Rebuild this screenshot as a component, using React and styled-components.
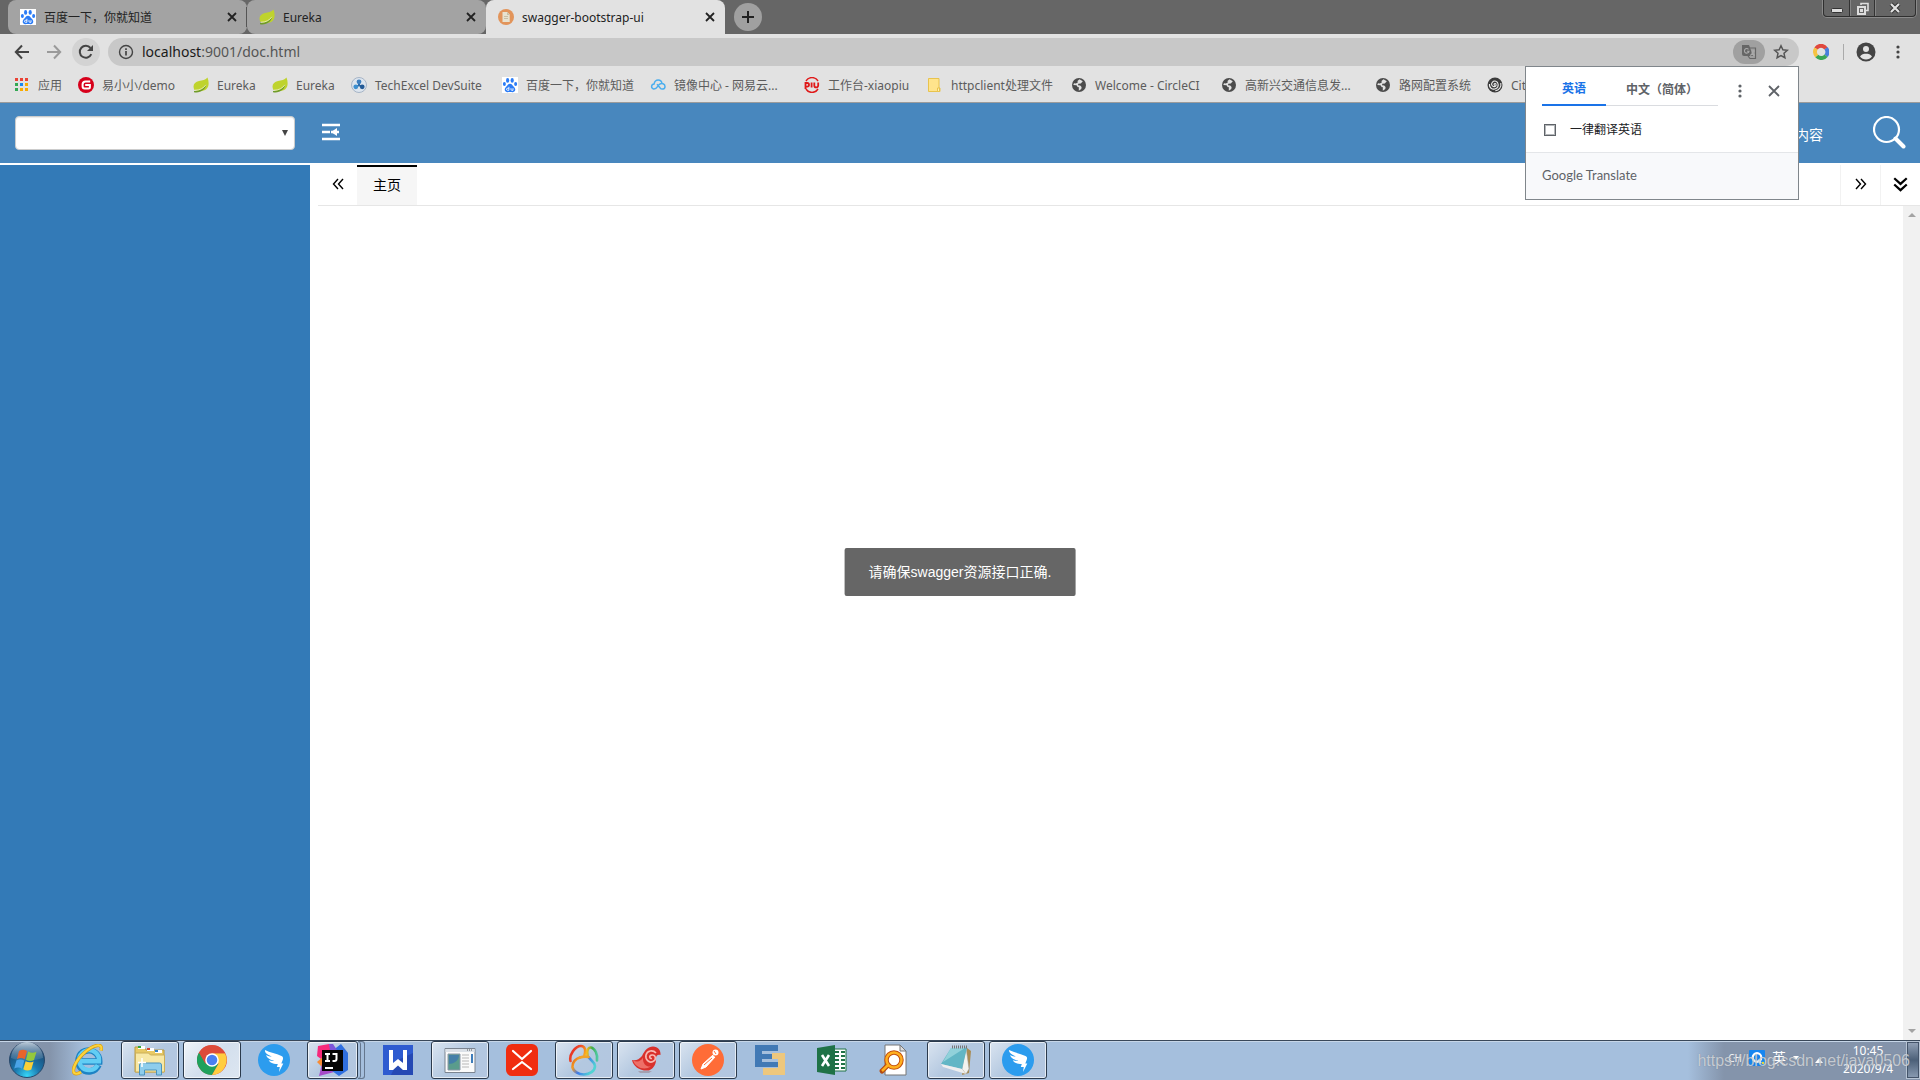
import React from "react";
import styled, { createGlobalStyle, css } from "styled-components";

const Global = createGlobalStyle`
  *, *::before, *::after { box-sizing: border-box; }
  html, body { margin: 0; padding: 0; }
  body { font-family: "Noto Sans", "Noto Sans CJK SC", sans-serif; font-size: 12px; background: #fff; overflow: hidden; }
  button { border: 0; padding: 0; margin: 0; background: none; font: inherit; color: inherit; }
  a { color: inherit; text-decoration: none; }
  svg { display: block; flex: none; }
`;

const Screen = styled.div`
  display: flex;
  flex-direction: column;
  height: 100vh;
  position: relative;
`;

/* ---------- browser chrome ---------- */
const TabStrip = styled.div`
  display: flex;
  height: 34px;
  flex: none;
  padding-left: 8px;
  background: #666;
`;
const BrowserTab = styled.div`
  display: flex;
  align-items: center;
  width: 239px;
  height: 34px;
  padding: 0 7px 0 12px;
  gap: 8px;
  border-radius: 8px 8px ${(p) => (p.$active ? "0 0" : "8px 8px")};
  background: ${(p) => (p.$active ? "#e2e2e2" : "#a3a3a3")};
  color: #222;
`;
const TabTitle = styled.span`
  flex: 1;
  padding-top: 1px;
  font-size: 12px;
  line-height: 18px;
  white-space: nowrap;
`;
const TabDivider = styled.span`
  width: 1px;
  height: 20px;
  margin-left: -1px;
  align-self: center;
  background: #555;
`;
const IconButton = styled.button`
  display: flex;
  align-items: center;
  justify-content: center;
  flex: none;
  width: ${(p) => p.$size || 16}px;
  height: ${(p) => p.$size || 16}px;
  border-radius: 50%;
  background: ${(p) => p.$bg || "transparent"};
`;
const NewTabSlot = styled.div`
  display: flex;
  align-items: center;
  padding-left: 9px;
`;
const WindowControls = styled.div`
  display: flex;
  margin-left: auto;
  margin-right: 4px;
  height: 17px;
  border: 1px solid #2f2f2f;
  border-top: 0;
  border-radius: 0 0 4px 4px;
  box-shadow: 0 0 0 1px #8a8a8a;
`;
const WindowButton = styled.button`
  display: flex;
  align-items: center;
  justify-content: center;
  width: ${(p) => p.$w}px;
  & + & { border-left: 1px solid #333; box-shadow: inset 1px 0 #858585; }
`;

const Toolbar = styled.div`
  display: flex;
  align-items: center;
  height: 36px;
  flex: none;
  padding: 0 8px;
  background: #e2e2e2;
`;
const NavButtons = styled.div`
  display: flex;
  gap: 4px;
  margin-right: 8px;
`;
const Omnibox = styled.div`
  display: flex;
  align-items: center;
  flex: 1;
  height: 28px;
  padding: 0 6px 0 10px;
  gap: 4px;
  border-radius: 14px;
  background: #c8c8c8;
  color: #555;
`;
const Address = styled.a`
  flex: 1;
  padding-left: 4px;
  font-family: "Noto Sans", sans-serif;
  font-size: 14px;
  line-height: 20px;
  b { font-weight: 400; color: #1a1a1a; }
`;
const TranslateButton = styled.button`
  display: flex;
  align-items: center;
  justify-content: center;
  width: 32px;
  height: 24px;
  border-radius: 12px;
  background: #a0a0a0;
`;
const ToolbarEnd = styled.div`
  display: flex;
  align-items: center;
  gap: 12px;
  width: 113px;
  padding-left: 14px;
`;
const ToolbarRule = styled.span`
  width: 1px;
  height: 16px;
  margin-left: 2px;
  background: #aaa;
`;

const Bookmarks = styled.nav`
  display: flex;
  align-items: center;
  height: 33px;
  flex: none;
  padding: 0 0 3px 14px;
  overflow: hidden;
  background: #e2e2e2;
  border-bottom: 1px solid #9b9b9b;
`;
const Bookmark = styled.a`
  display: flex;
  align-items: center;
  flex: none;
  gap: 8px;
  width: ${(p) => p.$w}px;
  font-size: 12px;
  line-height: 18px;
  color: #5c5c5c;
  white-space: nowrap;
`;
const BookmarkTitle = styled.span`
  padding-top: 2px;
`;

/* ---------- page ---------- */
const Page = styled.main`
  display: flex;
  flex-direction: column;
  flex: 1;
  min-height: 0;
  position: relative;
`;
const Header = styled.header`
  display: flex;
  align-items: center;
  height: 60px;
  flex: none;
  padding: 0 14px 2px 15px;
  margin-bottom: 2px;
  background: #4887be;
`;
const SelectWrap = styled.label`
  display: flex;
  position: relative;
  width: 280px;
  margin-right: 27px;
  padding-top: 1px;
  svg { position: absolute; right: 5px; top: 13px; pointer-events: none; }
`;
const GroupSelect = styled.select`
  appearance: none;
  width: 100%;
  height: 34px;
  border: 1px solid #ccc;
  border-radius: 4px;
  background: #fff;
  box-shadow: inset 0 1px 1px rgba(0, 0, 0, 0.08);
`;
const SearchInput = styled.input`
  width: 64px;
  height: 34px;
  margin-left: auto;
  margin-right: 14px;
  padding: 4px 0 0;
  border: 0;
  outline: 0;
  background: transparent;
  font-family: "Noto Sans", "Noto Sans CJK SC", sans-serif;
  font-size: 14px;
  color: #fff;
  &::placeholder { color: #fff; opacity: 1; }
`;
const Body = styled.div`
  display: flex;
  flex: 1;
  min-height: 0;
`;
const Sidebar = styled.aside`
  width: 310px;
  flex: none;
  background: #337ab7;
`;
const Content = styled.section`
  display: flex;
  flex-direction: column;
  flex: 1;
  padding-left: 8px;
`;
const PageTabs = styled.div`
  display: flex;
  height: 41px;
  flex: none;
  border-bottom: 1px solid #e6e6e6;
`;
const TabScroll = styled.button`
  display: flex;
  align-items: center;
  justify-content: center;
  width: ${(p) => (p.$ruled ? 40 : 39)}px;
  padding-bottom: 2px;
  border-left: ${(p) => (p.$ruled ? "1px solid #f2f2f2" : "0")};
`;
const PageTab = styled.button`
  width: 60px;
  padding-bottom: 2px;
  border-top: 2px solid #000;
  background: #f6f6f6;
  font-size: 14px;
  line-height: 20px;
  color: #000;
`;
const Spacer = styled.span`
  flex: 1;
`;
const Viewport = styled.div`
  display: flex;
  justify-content: flex-end;
  flex: 1;
`;
const Scrollbar = styled.div`
  display: flex;
  flex-direction: column;
  justify-content: space-between;
  align-items: center;
  width: 17px;
  padding: 6px 0;
  background: #f1f1f1;
`;
const Toast = styled.div`
  position: absolute;
  left: 50%;
  top: 50%;
  transform: translate(-50%, -50%);
  padding: 12px 24px;
  border-radius: 2px;
  background: #666;
  color: #fff;
  font-family: "Liberation Sans", "Noto Sans CJK SC", sans-serif;
  font-size: 14px;
  line-height: 24px;
  white-space: nowrap;
`;

/* ---------- translate bubble ---------- */
const Bubble = styled.div`
  position: absolute;
  top: 66px;
  right: 121px;
  width: 274px;
  border: 1px solid #80868b;
  background: #fff;
`;
const BubbleTop = styled.div`
  display: flex;
  align-items: center;
  height: 47px;
  padding-left: 16px;
`;
const LangTab = styled.button`
  width: ${(p) => p.$w}px;
  height: 39px;
  align-self: flex-start;
  padding-top: 7px;
  border-bottom: ${(p) => (p.$active ? "2px solid #1a73e8" : "1px solid #dadce0")};
  color: ${(p) => (p.$active ? "#1a73e8" : "#5f6368")};
  font-size: 12px;
  font-weight: 700;
  line-height: 18px;
  white-space: nowrap;
`;
const BubbleActions = styled.div`
  display: flex;
  gap: 18px;
  padding-left: 14px;
`;
const Always = styled.label`
  display: flex;
  align-items: center;
  gap: 14px;
  height: 38px;
  padding: 0 0 6px 18px;
  font-size: 12px;
  line-height: 18px;
  color: #202124;
`;
const Check = styled.input`
  appearance: none;
  width: 12px;
  height: 12px;
  margin: 0;
  border: 1px solid #5f6368;
  outline: 1px solid #b4b7ba;
  outline-offset: -2px;
`;
const BubbleFooter = styled.div`
  height: 47px;
  padding: 12px 16px;
  border-top: 1px solid #e4e6e9;
  background: #f8f9fb;
  color: #5f6368;
  font-family: Lato, sans-serif;
  font-size: 13px;
  line-height: 20px;
`;

/* ---------- taskbar ---------- */
const Taskbar = styled.footer`
  display: flex;
  align-items: stretch;
  height: 40px;
  flex: none;
  padding-bottom: 1px;
  border-top: 1px solid #39485a;
  box-shadow: inset 0 1px #c6d6e8;
  background: linear-gradient(90deg, #8494ab 0, #8494ab 50px, #a5bfdd 85px, #a5bfdd calc(100% - 232px), #8494ab calc(100% - 196px), #8494ab 100%);
`;
const Start = styled.button`
  display: flex;
  align-items: center;
  justify-content: center;
  width: 54px;
  margin-right: 5px;
`;
const Apps = styled.div`
  display: flex;
  gap: 4px;
`;
const raised = css`
  border: 1px solid #2b3a4c;
  border-radius: 3px;
  box-shadow: inset 0 0 0 1px rgba(255, 255, 255, 0.65);
  background: linear-gradient(135deg, ${(p) => (p.$front ? "#f0f4f9, #d3dfed 50%, #dde6f1" : "#dae4f0, #b3c8e0 50%, #b3c6e0")});
`;
const AppButton = styled.button`
  display: flex;
  align-items: center;
  justify-content: center;
  width: ${(p) => (p.$stack ? 51 : 58)}px;
  ${(p) => p.$open && raised}
`;
const Stack = styled.span`
  display: flex;
  width: 58px;
  &::after {
    content: "";
    flex: 1;
    border: 1px solid #65778e;
    border-left: 0;
    border-radius: 0 3px 3px 0;
    box-shadow: inset -3px 0 #a5bfdd, inset -4px 0 #65778e;
  }
`;
const Tray = styled.div`
  display: flex;
  align-items: center;
  margin-left: auto;
  color: #fff;
`;
const Ime = styled.div`
  display: flex;
  align-items: center;
  gap: 7px;
  margin-right: 9px;
  padding-bottom: 5px;
  line-height: 16px;
`;
const ImeLang = styled.span`
  font-family: "Noto Sans", sans-serif;
  font-size: 10px;
  color: #f2f2f2;
`;
const ImeMode = styled.span`
  font-size: 14px;
`;
const Clock = styled.time`
  width: 54px;
  margin: 0 11px;
  text-align: center;
  font-family: "Noto Sans", sans-serif;
  font-size: 12px;
  line-height: 18px;
  white-space: nowrap;
`;
const ShowDesktop = styled.button`
  width: 14px;
  align-self: stretch;
  border: 1px solid #b7c4d4;
  outline: 1px solid #44546a;
  outline-offset: -2px;
  background: linear-gradient(#93a2b7, #4c6078 50%, #8b9cb3);
`;
const Watermark = styled.div`
  position: absolute;
  right: 10px;
  bottom: 8px;
  font-family: "Liberation Sans", sans-serif;
  font-size: 16px;
  line-height: 22px;
  color: rgba(225, 228, 232, 0.75);
  text-shadow: 0 0 1px rgba(90, 100, 115, 0.6);
  pointer-events: none;
`;

/* ---------- icons ---------- */
const Svg = ({ s = 16, w, h, vb, children }) => (
  <svg width={w || s} height={h || s} viewBox={vb || `0 0 ${w || s} ${h || s}`} fill="none" aria-hidden="true">
    {children}
  </svg>
);
const Cross = ({ c = "#222", s = 16, k = 4 }) => (
  <Svg s={s} vb="0 0 16 16"><path d={`M${k} ${k}L${16 - k} ${16 - k}M${16 - k} ${k}L${k} ${16 - k}`} stroke={c} strokeWidth="1.8" /></Svg>
);
const Paw = () => (
  <Svg>
    <path fill="#fff" d="M0 0h16v16H0z" />
    <g fill="#2b7cf6">
      <ellipse cx="5.6" cy="3.4" rx="1.6" ry="2.3" /><ellipse cx="10.2" cy="3.4" rx="1.6" ry="2.3" />
      <ellipse cx="2.4" cy="7" rx="1.5" ry="2" /><ellipse cx="13.6" cy="7" rx="1.5" ry="2" />
      <path d="M8 6.8c2 0 2.4 1.7 3.8 2.9 2.4 2 1.7 5.3-.9 5.5-1 .1-1.8-.2-2.9-.2s-1.900.3-2.900.2c-2.600-.2-3.300-3.500-.9-5.500C5.600 8.500 6 6.800 8 6.800z" />
    </g>
    <path d="M6.900 9.800v3.500H5.500a1 1 0 010-2h1.400M9 11.200v1.300q0 .8 1 .8h1v-2.100" stroke="#fff" strokeWidth=".9" />
  </Svg>
);
const Leaf = () => (
  <Svg>
    <path fill="#bfd32d" d="M14.500 .5c1.500 4 1.800 9-1 11.600-3 2.700-8 2.500-12 1C-1 8.500 1.500 4.800 6 4c3.500-.6 6.500-1 8.500-3.500z" />
    <path fill="#6f9b2a" d="M1 13.900c5 .3 9.500-1.500 12.300-6.900-.7 5.800-6.300 9.500-12.300 8.200z" />
    <path d="M2 13.200c4.500 0 8.500-1.700 11-5.500" stroke="#eef3c9" strokeWidth=".8" />
  </Svg>
);
const DocIcon = () => (
  <Svg><circle cx="8" cy="8" r="8" fill="#e2945a" /><path fill="#e8e2cf" d="M4.500 3h4.700l2.500 2.600V13H4.500z" /><path fill="#c8bfa5" d="M9 3v3h2.700zM6 7h4v1H6zM6 9h4v1H6z" /></Svg>
);
const AppsGrid = () => {
  const colors = ["#ea4335", "#ea4335", "#ea4335", "#34a853", "#1a88f0", "#f9ab00", "#34a853", "#f9ab00", "#f9ab00"];
  return <Svg>{colors.map((c, i) => <rect key={i} x={1 + (i % 3) * 5} y={1 + Math.floor(i / 3) * 5} width="3" height="3" fill={c} />)}</Svg>;
};
const GMark = () => (
  <Svg><circle cx="8" cy="8" r="8" fill="#d7001b" /><path d="M12.200 4.500H7.500A3 3 0 004.600 7.200v2.300a2 2 0 002 2h3.800a1.500 1.500 0 001.500-1.500V8.100H7.200" stroke="#fff" strokeWidth="2" /></Svg>
);
const Tech = () => (
  <Svg><circle cx="8" cy="8" r="7.500" fill="#dde5ee" stroke="#a6b4c6" /><path d="M8 5v4M5 10l3-2 3 2" stroke="#2c6aa8" strokeWidth="2" /><circle cx="8" cy="4.800" r="2.400" fill="#3d7fbf" /><circle cx="4.800" cy="9.800" r="2.400" fill="#3d8fcf" /><circle cx="11.200" cy="9.800" r="2.400" fill="#235a96" /></Svg>
);
const Cloud = () => (
  <Svg><path d="M3.500 12a2.600 2.600 0 01.6-5.100C4.600 4.300 6.200 3 8.200 3c2 0 3.400 1.200 3.800 3.400M3.500 12c3.500.6 4-3.500 6.200-4.900 2-1.300 5.300-.6 5.300 2.300 0 3.200-3.700 3.400-5 1.400L7 7.200" stroke="#4aaeee" strokeWidth="1.500" /></Svg>
);
const Piu = () => (
  <Svg><path d="M2 4a7 7 0 0112 0M2 12a7 7 0 0012 0" stroke="#e01818" strokeWidth="1.500" /><path d="M1.500 12V6h1.700a1.500 1.500 0 010 3.600H1.500M7.600 5.500v5M10.300 5.500v3a1.900 1.900 0 003.900 0v-3" stroke="#e01818" strokeWidth="1.800" /></Svg>
);
const Folder = () => (
  <Svg><path d="M1.500 1.500h10.500v9.500h1v3.500H1.500z" fill="#ffe48c" stroke="#e8c34d" /><path d="M12.500 11v3.500H10.500V11z" fill="#fff0b4" stroke="#e8c34d" /></Svg>
);
const Globe = () => (
  <Svg><circle cx="8" cy="8" r="7" fill="#4b4b4b" /><path fill="#e2e2e2" d="M8.500 2.300 6.500 4l.3 1.500-2 1L3 6.200 2.300 8l3.200.3 1.300 1.900 1-.3v3.800l2.500-1.700.3-2-1.400-1.400-2.200-.3.3-1.500 2.500-.3 2-2.200z" /></Svg>
);
const Swirl = () => (
  <Svg><circle cx="8" cy="8" r="7.500" fill="#3b3b3b" /><path d="M8 8.500a1 1 0 111-1.300c.8 2.200-2.500 3.500-4 1.300S6 3.500 8.800 4.200s3.500 5.800.2 7.300-7-.2-6.500-4.500M13.800 6c.8 4-1.800 7.500-5.500 7.700" stroke="#eee" strokeWidth="1.100" /></Svg>
);
const Back = ({ c = "#444", flip }) => (
  <Svg><g transform={flip ? "matrix(-1 0 0 1 16 0)" : undefined}><path d="M15 8H2M8 1.500 1.800 8 8 14.500" stroke={c} strokeWidth="2" /></g></Svg>
);
const Reload = () => (
  <Svg><path d="M13.300 10.200A6 6 0 1112.500 4" stroke="#444" strokeWidth="2" /><path fill="#444" d="M15 1v6H9z" /></Svg>
);
const Info = () => (
  <Svg><circle cx="8" cy="8" r="6.500" stroke="#444" strokeWidth="1.400" /><path d="M8 7v4.500M8 4.200v1.700" stroke="#444" strokeWidth="1.700" /></Svg>
);
const TranslateIcon = () => (
  <Svg><path fill="#666" d="M1 1h7l1 2.500 3 8.500H3a2 2 0 01-2-2z" /><path d="M9 4h5.500v10.500H9l-2-2.500" stroke="#666" strokeWidth="1.200" /><path d="M7.500 5.300a2.300 2.300 0 10.500 2H6M10.500 7h3.500M12.200 6v1c0 2-2 4-3 4.500M10.700 8.500l3 3" stroke="#aaa" strokeWidth="1.100" /></Svg>
);
const Star = () => (
  <Svg><path d="m8 1.800 1.900 4 4.400.5-3.300 3 .9 4.400L8 11.500l-3.900 2.200.9-4.400-3.300-3 4.400-.5z" stroke="#555" strokeWidth="1.500" /></Svg>
);
const Ring = () => (
  <Svg s={16} vb="0 0 32 32"><g strokeWidth="8"><path d="M6 9a12 12 0 0120 0" stroke="#e0483e" /><path d="M26 8.500a12 12 0 010 15" stroke="#4a7fdc" /><path d="M26 23.500a12 12 0 01-18.500.5" stroke="#3aa655" /><path d="M7.500 24A12 12 0 016 9" stroke="#f5c342" /></g></Svg>
);
const Person = () => (
  <Svg s={20}><circle cx="10" cy="10" r="9.500" fill="#444" /><circle cx="10" cy="7" r="3" fill="#e2e2e2" /><path fill="#e2e2e2" d="M4 14.500c1-2.300 4-2.800 6-2.800s5 .5 6 2.800a7.500 7.500 0 01-12 0z" /></Svg>
);
const Dots = ({ c = "#444" }) => (
  <Svg><g fill={c}><circle cx="8" cy="3" r="1.600" /><circle cx="8" cy="8" r="1.600" /><circle cx="8" cy="13" r="1.600" /></g></Svg>
);
const Chevrons = ({ d, s = 12, sw = 1.4 }) => (
  <Svg s={s} vb="0 0 12 12"><path d={d} stroke="#000" strokeWidth={sw} /></Svg>
);

const StartOrb = () => (
  <Svg s={38}>
    <defs>
      <radialGradient id="orb" cx=".5" cy=".95" r=".9"><stop offset="0" stopColor="#35d6f8" /><stop offset=".4" stopColor="#1b78ae" /><stop offset="1" stopColor="#1d3f66" /></radialGradient>
      <linearGradient id="orbTop" x2="0" y2="1"><stop offset="0" stopColor="#d7e4ee" stopOpacity=".85" /><stop offset="1" stopColor="#7da0bd" stopOpacity=".2" /></linearGradient>
    </defs>
    <circle cx="19" cy="19" r="17.500" fill="url(#orb)" stroke="#28486b" />
    <path fill="url(#orbTop)" d="M3 17a16 16 0 0132 0c-9 3-22 4-32 0z" />
    <path fill="#e9632b" d="M11 10c3-1.800 5.500-1.500 8 0l-2.300 8.200c-2.500-1.500-5-1.500-7.700-.2z" />
    <path fill="#94c83d" d="M20.200 10.600c2.800 1.600 5.300 1.600 8.300.2L26 19c-2.700 1.300-5.400 1.200-8-.3z" />
    <path fill="#4aa3e6" d="M8.500 19.300c2.800-1.300 5.200-1.200 7.800.2L14 27.700c-2.400-1.500-5-1.500-7.800-.2z" />
    <path fill="#fbcf37" d="M17.600 20.200c2.700 1.500 5.300 1.500 8 .2l-2.300 8.200c-2.700 1.300-5.400 1.200-8-.3z" />
  </Svg>
);
const IE = () => (
  <Svg s={32}>
    <path d="M26.500 21A10.500 10.500 0 1127.300 17.500H9" stroke="#1d83c4" strokeWidth="6.400" />
    <path d="M25.800 21A10 10 0 1127 17.300H9" stroke="#62cdf4" strokeWidth="4.400" />
    <path d="M9 28c-6 3.500-9.500 1.500-6.500-6C6 13 17 3 25 1.500c4-.7 5 1.500 4 5" stroke="#d79a10" strokeWidth="3.400" />
    <path d="M9 28c-6 3.500-9.500 1.500-6.500-6C6 13 17 3 25 1.500c4-.7 5 1.500 4 5" stroke="#fbd33c" strokeWidth="2.200" />
  </Svg>
);
const Explorer = () => (
  <Svg s={32}>
    <path fill="#e8c964" stroke="#b99b45" d="M1 3h9l2 3h18v22H1z" /><path fill="#f7e8a6" stroke="#cbae58" d="M1.500 9h13l2 2h14v17h-29z" />
    <path fill="#fff" d="M4 2h7v3H4zM13 4h7v3h-7zM21 6h7v3h-7z" /><path fill="#30a63a" d="M4 2h3v2H4z" /><path fill="#d8432e" d="M13 4h3v2h-3z" /><path fill="#3181c7" d="M21 6h3v2h-3z" />
    <path fill="#8ecdec" stroke="#4a93bd" d="M5.500 31V21q0-2 2-2h18q2 0 2 2v10h-5v-5h-12v5z" /><path d="M8 14v9M4 18.500h8" stroke="#fff" strokeWidth="1.500" />
  </Svg>
);
const ChromeIcon = () => (
  <Svg s={30}>
    <circle cx="15" cy="15" r="15" fill="#dd4b39" /><path fill="#1fa15d" d="M2 7.500A15 15 0 0015 30l6.500-11.300-13-.2z" /><path fill="#ffcd40" d="M15 30A15 15 0 0028 8.200H15l6.500 10.500z" />
    <path fill="#dd4b39" d="M15 8.200h13A15 15 0 002 7.500l6.500 11z" /><circle cx="15" cy="15" r="6.800" fill="#fff" /><circle cx="15" cy="15" r="5.300" fill="#4a80f0" />
  </Svg>
);
const Ding = () => (
  <Svg s={32}><circle cx="16" cy="16" r="16" fill="#2c9cee" /><path fill="#fff" d="M7 6c5 2.500 11 3.500 16.500 6 2 1 1.800 2.600 1 4.500l-1.200 3h2L21 28l.8-5h-3l1-3C14 20 11.500 18 10.800 16.200c2 .6 4 .8 5.500.6C11 15.500 8.500 13.300 8.200 11c1.600 1 4 1.500 5.600 1.500C9 10.600 6.500 8.500 7 6z" /></Svg>
);
const IntelliJ = () => (
  <Svg s={32}>
    <path fill="#f7297b" d="M1 2 12 0l5 10-9 8-8-6z" /><path fill="#f88c35" d="m0 18 8-7 3 10-6 2z" /><path fill="#a64ac9" d="m2 32 5-20 14 15z" /><path fill="#2f6fe0" d="M15 7 24 0l7 9v17l-9 6-11-8z" /><path fill="#7d55da" d="M12 0h4l6 9-8 4z" />
    <path fill="#050505" d="M5 6h21v21H5z" /><path d="M8 10h5M10.500 10v7M8 17h5M15.500 10h4v5q0 2-2 2h-2M8 24h8" stroke="#fff" strokeWidth="2" />
  </Svg>
);
const WIcon = () => (
  <Svg s={30}><path fill="#2e5bd0" d="M0 0h30v30H0z" /><path fill="#1f3ea2" d="m15 15 15-7v22H8z" opacity=".6" /><path fill="#fff" d="M6 5h4v13l5-4 5 4V5h4v20h-4l-5-4.500L10 25H6z" /></Svg>
);
const WindowIcon = () => (
  <Svg w={32} h={28}><path fill="#fafafa" stroke="#7b8490" d="M1 2.500h30v24H1z" /><path fill="#dbe1e8" d="M1.500 3h29v3h-29z" /><path fill="#5a9c8c" stroke="#8a97a8" d="M4 8h12v16H4z" /><path fill="#447fa8" d="M5 9h10c0 6-6 9-10 9z" /><path d="M18 9h7M18 12h7M18 15h7M18 18h7M18 21h7" stroke="#b8b8b8" /><path fill="#3e7dba" d="M27 8h2v9h-2z" /><path d="M23 4h6" stroke="#555" strokeDasharray="1 1" /></Svg>
);
const XMind = () => (
  <Svg s={32}><rect width="32" height="32" rx="6" fill="#f02d10" /><path d="M7 7l9 8 9-8M7 25l9-7 9 7" stroke="#fff" strokeWidth="2.200" strokeLinecap="round" strokeLinejoin="round" /></Svg>
);
const PawRing = () => (
  <Svg s={32}>
    <defs>
      <linearGradient id="lobeL" x2="1" y2=".6"><stop offset="0" stopColor="#e0231e" /><stop offset=".5" stopColor="#ee4a2a" /><stop offset="1" stopColor="#f9b21d" /></linearGradient>
      <linearGradient id="lobeR" x2="1"><stop offset="0" stopColor="#f5b81c" /><stop offset=".5" stopColor="#3fae49" /><stop offset="1" stopColor="#4fc9a4" /></linearGradient>
      <linearGradient id="palm" x1="0" y1="0" x2="1" y2=".5"><stop offset="0" stopColor="#d8591d" /><stop offset=".25" stopColor="#f59c22" /><stop offset=".55" stopColor="#3d79ea" /><stop offset="1" stopColor="#52d3d3" /></linearGradient>
    </defs>
    <g strokeWidth="2.600" strokeLinecap="round">
      <path d="M2.500 17C1 11 7 2 13 2c4 0 5 4 3.500 9" stroke="url(#lobeL)" />
      <path d="M19.500 11C18.500 7 20 3 23 3.500c4 .7 7 7 6 13" stroke="url(#lobeR)" />
      <path d="M12 13.500c-4 1-8 5-7.500 9.500.6 4.500 6 7.500 11.500 7.500s11-3.500 11-8.500c0-4-4-5-6.500-9" stroke="url(#palm)" />
      <path d="M12 13.500c2.500-.8 5.500-1.200 8.500-.5" stroke="#f0a32a" />
    </g>
  </Svg>
);
const Shell = () => (
  <Svg s={32}>
    <path fill="#d9312c" d="M2 16c4 1 7-.5 10-4 3-6 6-9.500 11-9.500 5 0 8 4 7.500 8.500-2.500-1-4.500.5-4.500 3 .5 5.500-2 10.500-7 12.500C10 27.500 3 22 2 16z" />
    <path fill="#ee6f67" d="M3 16.500c5 2 8 .5 10-3-.5 6 3 9.500 8 9-7 4-15 1.500-18-6z" />
    <path d="M26 9c-3-3.500-9-2.500-10 2s3 8.500 7 6.500 2.500-7-1-6.500-2.500 4 0 3.500" stroke="#f8b9b2" strokeWidth="1.600" /><path fill="#8a5a58" opacity=".35" d="M8 27h14l-3 2h-9z" />
  </Svg>
);
const Postman = () => (
  <Svg s={32}><circle cx="16" cy="16" r="16" fill="#ff6c37" /><circle cx="23.500" cy="8.500" r="3" fill="#fff" /><path d="M21 11 11 20l-2 5 5-2 9-10" fill="#fff" stroke="#fff" strokeWidth="1" /><path d="m12 21 8-7M22 7l2 3" stroke="#ff6c37" strokeWidth="1" /></Svg>
);
const ESIcon = () => (
  <Svg s={30}><path fill="#edc77d" d="M17 8h13v22H8v-7h15V14h-6z" /><path fill="#4179b5" d="M0 0h23v6H7v3h10v5H7v3h16v5H0z" /></Svg>
);
const ExcelIcon = () => (
  <Svg s={30}><path fill="#fff" stroke="#1f7246" d="M16 4h13v22H16z" /><path d="M18 7h4M18 11h4M18 15h4M18 19h4M18 23h4M24 7h4M24 11h4M24 15h4M24 19h4M24 23h4" stroke="#1f7246" strokeWidth="2" /><path fill="#1f7246" d="m0 3 18-3v30L0 27z" /><path d="m5 10 7 11M12 10 5 21" stroke="#fff" strokeWidth="2.600" /></Svg>
);
const DocSearch = () => (
  <Svg s={32}><path fill="#fff" stroke="#777" d="M7 1h15l6 6v24H7z" /><path fill="#ddd" stroke="#777" d="M22 1v6h6z" /><path d="m10 21-6 6" stroke="#b54a10" strokeWidth="5" strokeLinecap="round" /><circle cx="16" cy="16" r="7.500" stroke="#c4500f" strokeWidth="4.500" /><circle cx="16" cy="16" r="7.500" stroke="#ffb01f" strokeWidth="2.500" /><path d="m10 21-6 6" stroke="#ffb01f" strokeWidth="2.500" /></Svg>
);
const Notepad = () => (
  <Svg s={32}><path fill="#a98c55" d="M27 4l4 3-2 22-7 2z" /><path fill="#f2f2ee" stroke="#999" strokeWidth=".5" d="M26 3l3 22-3 5-4-5z" /><path fill="#62b6c5" d="M11 4h16l-5 21-21-5z" /><path fill="#a5dde2" d="M11 4h14L3 18z" opacity=".7" /><path fill="#eee" d="m1 20 21 5 4 5L3 23z" /><path d="M12 3h15" stroke="#777" strokeWidth="3" strokeDasharray="1 1" /></Svg>
);
const ImeQ = () => (
  <Svg><rect width="16" height="16" rx="1" fill="#1686f0" /><circle cx="8" cy="7.500" r="4.300" stroke="#fff" strokeWidth="2.200" /><path d="m9 10 3 3" stroke="#fff" strokeWidth="2" /><circle cx="14" cy="13" r="1.300" fill="#e8d93a" /></Svg>
);

/* ---------- data ---------- */
const bookmarks = [
  ["应用", AppsGrid, 64],
  ["易小小/demo", GMark, 115],
  ["Eureka", Leaf, 79],
  ["Eureka", Leaf, 79],
  ["TechExcel DevSuite", Tech, 151],
  ["百度一下，你就知道", Paw, 148],
  ["镜像中心 - 网易云...", Cloud, 154],
  ["工作台-xiaopiu", Piu, 123],
  ["httpclient处理文件", Folder, 144],
  ["Welcome - CircleCI", Globe, 150],
  ["高新兴交通信息发...", Globe, 154],
  ["路网配置系统", Globe, 112],
  ["Cit", Swirl, 60],
];
const apps = [
  { name: "Internet Explorer", Icon: IE },
  { name: "Explorer", Icon: Explorer, open: true },
  { name: "Chrome", Icon: ChromeIcon, open: true, front: true },
  { name: "DingTalk", Icon: Ding },
  { name: "IntelliJ IDEA", Icon: IntelliJ, open: true, stack: true },
  { name: "W", Icon: WIcon },
  { name: "Window", Icon: WindowIcon, open: true },
  { name: "XMind", Icon: XMind },
  { name: "Navicat", Icon: PawRing, open: true },
  { name: "Shell", Icon: Shell, open: true },
  { name: "Postman", Icon: Postman, open: true },
  { name: "ES", Icon: ESIcon },
  { name: "Excel", Icon: ExcelIcon },
  { name: "Search", Icon: DocSearch },
  { name: "Notepad", Icon: Notepad, open: true },
  { name: "DingTalk chat", Icon: Ding, open: true },
];

const Tab = ({ icon, title, active }) => (
  <BrowserTab $active={active}>
    {icon}
    <TabTitle>{title}</TabTitle>
    <IconButton aria-label="Close tab"><Cross /></IconButton>
  </BrowserTab>
);

export default function App() {
  return (
    <Screen>
      <Global />
      <TabStrip>
        <Tab icon={<Paw />} title="百度一下，你就知道" />
        <TabDivider />
        <Tab icon={<Leaf />} title="Eureka" />
        <Tab icon={<DocIcon />} title="swagger-bootstrap-ui" active />
        <NewTabSlot>
          <IconButton $size={28} $bg="#a0a0a0" aria-label="New tab">
            <Svg><path d="M8 2v12M2 8h12" stroke="#222" strokeWidth="2" /></Svg>
          </IconButton>
        </NewTabSlot>
        <WindowControls>
          <WindowButton $w={25} aria-label="Minimize"><Svg s={12}><rect x=".5" y="6.500" width="11" height="4" rx="1" fill="#ddd" stroke="#333" /></Svg></WindowButton>
          <WindowButton $w={25} aria-label="Restore"><Svg s={13}><path d="M5 3V1.500h7v7h-2" stroke="#ddd" strokeWidth="1.600" /><path d="M2 5h7v7H2zM5 8h1v1H5z" stroke="#ddd" strokeWidth="2" /></Svg></WindowButton>
          <WindowButton $w={41} aria-label="Close"><Svg s={12}><path d="m2 2 8 8M10 2l-8 8" stroke="#333" strokeWidth="4" /><path d="m2 2 8 8M10 2l-8 8" stroke="#e2e2e2" strokeWidth="2.200" /></Svg></WindowButton>
        </WindowControls>
      </TabStrip>

      <Toolbar>
        <NavButtons>
          <IconButton $size={28} aria-label="Back"><Back /></IconButton>
          <IconButton $size={28} aria-label="Forward"><Back c="#9a9a9a" flip /></IconButton>
          <IconButton $size={28} $bg="#d3d3d3" aria-label="Reload"><Reload /></IconButton>
        </NavButtons>
        <Omnibox>
          <Info />
          <Address href="#doc"><b>localhost</b>:9001/doc.html</Address>
          <TranslateButton aria-label="Translate"><TranslateIcon /></TranslateButton>
          <IconButton $size={24} aria-label="Bookmark"><Star /></IconButton>
        </Omnibox>
        <ToolbarEnd>
          <Ring />
          <ToolbarRule />
          <Person />
          <IconButton $size={20} aria-label="Menu"><Dots /></IconButton>
        </ToolbarEnd>
      </Toolbar>

      <Bookmarks>
        {bookmarks.map(([title, Icon, w], i) => (
          <Bookmark key={i} href="#bookmark" $w={w}><Icon /><BookmarkTitle>{title}</BookmarkTitle></Bookmark>
        ))}
      </Bookmarks>

      <Page>
        <Header>
          <SelectWrap>
            <GroupSelect aria-label="Group" />
            <Svg s={9}><path fill="#444" d="M1 2h6L4 8z" /></Svg>
          </SelectWrap>
          <button aria-label="Collapse menu">
            <Svg s={18}><path d="M0 2h18M0 9h8M9 9h8M0 16h18" stroke="#fff" strokeWidth="2.400" /><path fill="#fff" d="m9 9 6-4v8z" /></Svg>
          </button>
          <SearchInput aria-label="Search" placeholder="内容" />
          <button aria-label="Search">
            <Svg s={33}><circle cx="13.500" cy="13.500" r="12.500" stroke="#fff" strokeWidth="2.200" /><path d="m22.500 22.500 8 8" stroke="#fff" strokeWidth="4" strokeLinecap="round" /></Svg>
          </button>
        </Header>
        <Body>
          <Sidebar />
          <Content>
            <PageTabs>
              <TabScroll aria-label="Scroll left"><Chevrons d="M6 1 1.500 6 6 11M11 1 6.500 6 11 11" /></TabScroll>
              <PageTab>主页</PageTab>
              <Spacer />
              <TabScroll $ruled aria-label="Scroll right"><Chevrons d="m1 1 4.500 5L1 11M6 1l4.500 5L6 11" /></TabScroll>
              <TabScroll $ruled aria-label="Tab actions"><Chevrons s={15} sw={1.8} d="m1 1 5 4.500L11 1M1 6l5 4.500L11 6" /></TabScroll>
            </PageTabs>
            <Viewport>
              <Scrollbar>
                <Svg w={8} h={5}><path fill="#a3a3a3" d="M0 5 4 1l4 4z" /></Svg>
                <Svg w={8} h={5}><path fill="#a3a3a3" d="m0 0 4 4 4-4z" /></Svg>
              </Scrollbar>
            </Viewport>
          </Content>
        </Body>
        <Toast role="status">请确保swagger资源接口正确.</Toast>
      </Page>

      <Taskbar>
        <Start aria-label="Start"><StartOrb /></Start>
        <Apps>
          {apps.map(({ name, Icon, open, front, stack }) => {
            const button = (
              <AppButton key={name} aria-label={name} $open={open} $front={front} $stack={stack}><Icon /></AppButton>
            );
            return stack ? <Stack key={name}>{button}</Stack> : button;
          })}
        </Apps>
        <Tray>
          <Ime>
            <ImeLang>CH</ImeLang>
            <ImeQ />
            <ImeMode>英</ImeMode>
            <Svg w={6} h={4}><path fill="#fff" d="M0 0h6L3 4z" /></Svg>
          </Ime>
          <Svg w={22} h={6}><path fill="#fff" d="m7 6 4-5 4 5z" /></Svg>
          <Clock>10:45<br />2020/9/4</Clock>
          <ShowDesktop aria-label="Show desktop" />
        </Tray>
      </Taskbar>

      <Bubble role="dialog" aria-label="Google Translate">
        <BubbleTop>
          <LangTab $w={64} $active>英语</LangTab>
          <LangTab $w={112}>中文（简体）</LangTab>
          <BubbleActions>
            <IconButton aria-label="Options"><Dots c="#5f6368" /></IconButton>
            <IconButton aria-label="Close"><Cross c="#5f6368" k={3} /></IconButton>
          </BubbleActions>
        </BubbleTop>
        <Always><Check type="checkbox" />一律翻译英语</Always>
        <BubbleFooter>Google Translate</BubbleFooter>
      </Bubble>
      <Watermark>https://blog.csdn.net/java0506</Watermark>
    </Screen>
  );
}
